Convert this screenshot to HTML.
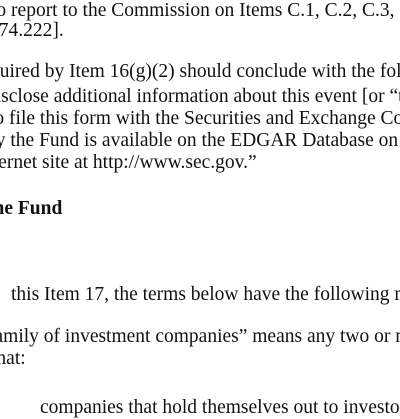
<!DOCTYPE html>
<html><head><style>
html,body{margin:0;padding:0;background:#fff;width:400px;height:400px;overflow:hidden;}
.l{position:absolute;white-space:nowrap;font-family:"Liberation Serif",serif;font-size:19.5px;color:#111;line-height:22px;}
b{font-weight:bold;}
</style></head><body>
<div class="l" style="left:-9px;top:0px">to report to the Commission on Items C.1, C.2, C.3, C.4</div>
<div class="l" style="left:-11px;top:20px">274.222].</div>
<div class="l" style="left:-10px;top:61px">quired by Item 16(g)(2) should conclude with the following</div>
<div class="l" style="left:-14px;top:86px">disclose additional information about this event [or “the</div>
<div class="l" style="left:-11px;top:108px">to file this form with the Securities and Exchange Commission</div>
<div class="l" style="left:-14px;top:130px">by the Fund is available on the EDGAR Database on</div>
<div class="l" style="left:-17px;top:152px">nternet site at http://www.sec.gov.”</div>
<div class="l" style="left:-13px;top:198px"><b>the Fund</b></div>
<div class="l" style="left:11px;top:284px">this Item 17, the terms below have the following meanings</div>
<div class="l" style="left:-12px;top:326px">family of investment companies” means any two or more</div>
<div class="l" style="left:-9px;top:348px">that:</div>
<div class="l" style="left:40px;top:397px">companies that hold themselves out to investors</div>
</body></html>
